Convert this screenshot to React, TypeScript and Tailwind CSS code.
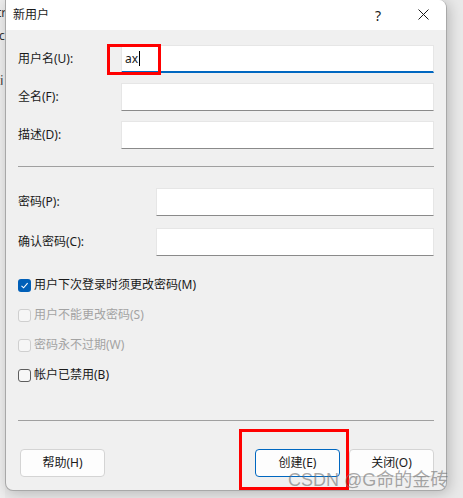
import React from 'react'

const font = { fontFamily: '"Segoe UI", "Noto Sans", "Noto Sans CJK SC", sans-serif' }

function Field({ label, labelW, active, value }: { label: string; labelW: string; active?: boolean; value?: string }) {
  return (
    <div className="flex items-center h-[28px]">
      <div className={`${labelW} shrink-0 text-[12px] text-[#1a1a1a]`}>{label}</div>
      <div
        className={`flex-1 h-[28px] bg-white border border-[#e6e6e6] flex items-center pl-[3px] text-[12px] text-[#1a1a1a] ${
          active ? 'border-b-2 border-b-[#0067c0]' : 'border-b-[#8a8a8a]'
        }`}
      >
        {value}
        {active && <span className="w-px h-[15px] bg-black ml-px" />}
      </div>
    </div>
  )
}

function Check({ label, checked, disabled }: { label: string; checked?: boolean; disabled?: boolean }) {
  return (
    <div className="flex items-center h-[30px] gap-[3px]">
      {checked ? (
        <div className="w-[13px] h-[13px] rounded-[3px] bg-[#005fb8] flex items-center justify-center">
          <svg width="9" height="9" viewBox="0 0 9 9">
            <path d="M1.5 4.8 L3.6 6.8 L7.6 2.2" fill="none" stroke="white" strokeWidth="1.1" />
          </svg>
        </div>
      ) : (
        <div
          className={`w-[13px] h-[13px] rounded-[3px] border ${
            disabled ? 'border-[#cfcfcf] bg-[#f6f6f6]' : 'border-[#5d5d5d] bg-[#f7f7f7]'
          }`}
        />
      )}
      <span className={`text-[12px] ${disabled ? 'text-[#a3a3a3]' : 'text-[#1a1a1a]'}`}>{label}</span>
    </div>
  )
}

function Btn({ label, primary }: { label: string; primary?: boolean }) {
  return (
    <div
      className={`w-[85px] h-[28px] rounded-[4px] bg-[#fdfdfd] flex items-center justify-center text-[12px] text-[#1a1a1a] border ${
        primary ? 'border-[#0067c0]' : 'border-[#d4d4d4]'
      }`}
    >
      {label}
    </div>
  )
}

export default function App() {
  return (
    <div className="relative w-[463px] h-[498px] overflow-hidden bg-[#e9e9e9] flex" style={font}>
      {/* background window peeking out on the left */}
      <div className="w-[5px] shrink-0 bg-[#eeeeee] overflow-hidden text-[12px] text-[#333] leading-none">
        <div className="mt-[7px] -ml-[3px]">tr</div>
        <div className="mt-[11px] -ml-[1px]">c</div>
        <div className="mt-[33px] -ml-[4px]">ti</div>
      </div>

      <div className="w-[442px] h-[491px] shrink-0 flex flex-col bg-[#f0f0f0] border-l border-r border-b border-[#a8a8a8] rounded-tr-[8px] rounded-b-[8px] overflow-hidden shadow-[2px_2px_14px_rgba(0,0,0,0.22)]">
        <div className="h-[30px] bg-white flex items-center pl-[7px] text-[12px] text-[#1a1a1a]">
          <span>新用户</span>
          <span className="ml-auto mr-[37px] text-[14px]">?</span>
          <svg width="11" height="11" viewBox="0 0 11 11" className="mr-[17px] -mt-[2px]">
            <path d="M0.5 0.5 L10.5 10.5 M10.5 0.5 L0.5 10.5" stroke="#1a1a1a" strokeWidth="1" />
          </svg>
        </div>

        <div className="flex-1 flex flex-col pl-[12px] pr-[12px]">
          <div className="mt-[15px] flex flex-col gap-[10px]">
            <Field label="用户名(U):" labelW="w-[103px]" active value="ax" />
            <Field label="全名(F):" labelW="w-[103px]" />
            <Field label="描述(D):" labelW="w-[103px]" />
          </div>
          <div className="mt-[17px] h-px bg-[#a0a0a0]" />
          <div className="mt-[21px] flex flex-col gap-[12px]">
            <Field label="密码(P):" labelW="w-[138px]" />
            <Field label="确认密码(C):" labelW="w-[138px]" />
          </div>
          <div className="mt-[14px] flex flex-col">
            <Check label="用户下次登录时须更改密码(M)" checked />
            <Check label="用户不能更改密码(S)" disabled />
            <Check label="密码永不过期(W)" disabled />
            <Check label="帐户已禁用(B)" />
          </div>
          <div className="mt-[30px] h-px bg-[#a0a0a0]" />
          <div className="mt-[28px] flex items-center pl-[2px]">
            <Btn label="帮助(H)" />
            <div className="ml-auto flex gap-[9px]">
              <Btn label="创建(E)" primary />
              <Btn label="关闭(O)" />
            </div>
          </div>
        </div>
      </div>

      {/* annotation boxes */}
      <div className="absolute left-[107px] top-[44px] w-[54px] h-[31px] border-[3px] border-[#ff0000]" />
      <div className="absolute left-[239px] top-[429px] w-[110px] h-[61px] border-[3px] border-[#ff0000]" />

      {/* watermark */}
      <div className="absolute left-[288px] top-[467px] text-[18px] text-[rgba(110,110,110,0.6)] whitespace-nowrap" style={{ fontFamily: '"Liberation Sans", "Noto Sans CJK SC", sans-serif' }}>
        CSDN @G命的金砖
      </div>
    </div>
  )
}
